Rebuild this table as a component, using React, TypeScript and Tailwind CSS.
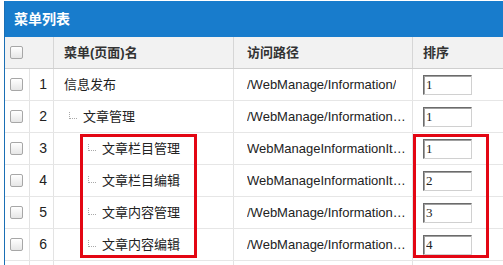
import React from 'react'

type Row = { id: number; name: string; level: number; path: string; sort: string }

const rows: Row[] = [
  { id: 1, name: '信息发布', level: 1, path: '/WebManage/Information/', sort: '1' },
  { id: 2, name: '文章管理', level: 2, path: '/WebManage/Information/Article/', sort: '1' },
  { id: 3, name: '文章栏目管理', level: 3, path: 'WebManageInformationItemList.aspx', sort: '1' },
  { id: 4, name: '文章栏目编辑', level: 3, path: 'WebManageInformationItemEdit.aspx', sort: '2' },
  { id: 5, name: '文章内容管理', level: 3, path: '/WebManage/Information/Article/List.aspx', sort: '3' },
  { id: 6, name: '文章内容编辑', level: 3, path: '/WebManage/Information/Article/Edit.aspx', sort: '4' },
  { id: 7, name: '用户管理', level: 1, path: '/WebManage/User/', sort: '2' },
]

const grid = 'grid grid-cols-[25px_24px_180px_179px_1fr]'

const Checkbox = () => (
  <span className="block w-[13px] h-[13px] rounded-[2px] border border-[#a7a7a7] bg-gradient-to-b from-white to-[#e6e6e6]" />
)

const App = () => {
  return (
    <div className="relative w-[503px] h-[265px] overflow-hidden bg-white font-['Liberation_Sans','Noto_Sans_CJK_SC',sans-serif] text-[#222]">
      <div className="ml-1 mt-px border-l border-[#1a6fb5]">
        <div className="h-9 bg-[#187ccc] flex items-center pl-[9px] text-white text-[14px] font-bold">
          菜单列表
        </div>

        <div className={`${grid} h-8 bg-[#f2f2f2] border-b border-[#cfcfcf] text-[13px] font-bold text-[#333]`}>
          <div className="col-span-2 border-r border-[#d6d6d6] flex items-center pl-[5px]">
            <Checkbox />
          </div>
          <div className="border-r border-[#d6d6d6] flex items-center pl-[10px]">菜单(页面)名</div>
          <div className="border-r border-[#d6d6d6] flex items-center pl-[13px]">访问路径</div>
          <div className="flex items-center pl-[10px]">排序</div>
        </div>

        {rows.map((r) => (
          <div key={r.id} className={`${grid} h-8 border-b border-[#e6e6e6]`}>
            <div className="border-r border-[#e3e3e3] flex items-center pl-[5px]">
              <Checkbox />
            </div>
            <div className="border-r border-[#e3e3e3] flex items-center justify-end pr-[6px] text-[14px]">
              {r.id}
            </div>
            <div
              className={`border-r border-[#e3e3e3] flex items-center text-[13px] ${
                r.level === 1 ? 'pl-[10px]' : r.level === 2 ? 'pl-[15px]' : 'pl-[34px]'
              }`}
            >
              {r.level > 1 && (
                <span className="w-2 h-[7px] mr-[6px] -mt-[2px] border-l border-b border-dotted border-[#a9a9a9]" />
              )}
              {r.name}
            </div>
            <div className="border-r border-[#e3e3e3] flex items-center pl-[13px] pr-[6px] text-[13px] min-w-0">
              <span className="truncate">{r.path}</span>
            </div>
            <div className="flex items-center pl-[10px]">
              <input
                defaultValue={r.sort}
                className="w-[49px] h-5 px-[2px] border border-t-[#6b6b6b] border-l-[#6b6b6b] border-b-[#d0d0d0] border-r-[#d0d0d0] shadow-[inset_1px_1px_0_#a0a0a0] font-['Liberation_Serif',serif] text-[13px] text-[#222] outline-none"
              />
            </div>
          </div>
        ))}
      </div>

      <div className="absolute left-[80px] top-[134px] w-[117px] h-[124px] border-[3px] border-[#e30613]" />
      <div className="absolute left-[413px] top-[134px] w-[76px] h-[124px] border-[3px] border-[#e30613]" />
    </div>
  )
}

export default App
